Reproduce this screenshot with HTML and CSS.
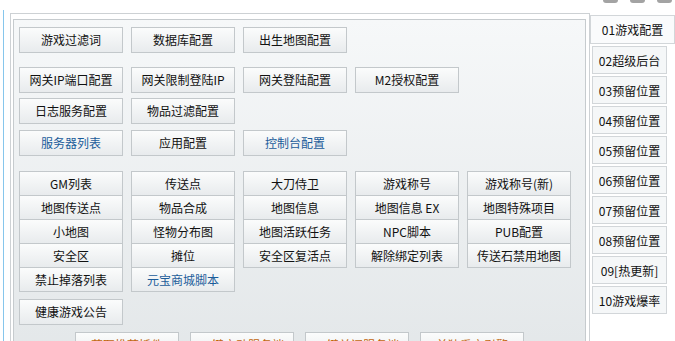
FILE: index.html
```html
<!DOCTYPE html>
<html lang="zh-CN">
<head>
    <meta charset="UTF-8">
    <title>游戏配置</title>
    <link rel="stylesheet" href="styles.css">
</head>
<body>
    <div class="app">
        <div class="topbar">
            <span class="winbtn"></span>
            <span class="winbtn"></span>
            <span class="winbtn"></span>
        </div>
        <div class="main">
            <div class="rail"></div>
            <div class="tabctl">
                <div class="page">
                    <div class="panel">
                        <div class="row row-1">
                            <div class="btn">游戏过滤词</div>
                            <div class="btn">数据库配置</div>
                            <div class="btn">出生地图配置</div>
                        </div>
                        <div class="row row-2">
                            <div class="btn">网关IP端口配置</div>
                            <div class="btn">网关限制登陆IP</div>
                            <div class="btn">网关登陆配置</div>
                            <div class="btn">M2授权配置</div>
                        </div>
                        <div class="row row-3">
                            <div class="btn">日志服务配置</div>
                            <div class="btn">物品过滤配置</div>
                        </div>
                        <div class="row row-4">
                            <div class="btn link">服务器列表</div>
                            <div class="btn">应用配置</div>
                            <div class="btn link">控制台配置</div>
                        </div>

                        <div class="stack">
                            <div class="btn">GM列表</div>
                            <div class="btn">传送点</div>
                            <div class="btn">大刀侍卫</div>
                            <div class="btn">游戏称号</div>
                            <div class="btn">游戏称号(新)</div>
                            <div class="btn">地图传送点</div>
                            <div class="btn">物品合成</div>
                            <div class="btn">地图信息</div>
                            <div class="btn">地图信息 EX</div>
                            <div class="btn">地图特殊项目</div>
                            <div class="btn">小地图</div>
                            <div class="btn">怪物分布图</div>
                            <div class="btn">地图活跃任务</div>
                            <div class="btn">NPC脚本</div>
                            <div class="btn">PUB配置</div>
                            <div class="btn">安全区</div>
                            <div class="btn">摊位</div>
                            <div class="btn">安全区复活点</div>
                            <div class="btn">解除绑定列表</div>
                            <div class="btn">传送石禁用地图</div>
                            <div class="btn">禁止掉落列表</div>
                            <div class="btn link">元宝商城脚本</div>
                        </div>

                        <div class="row row-6">
                            <div class="btn">健康游戏公告</div>
                        </div>
                        <div class="actions">
                            <div class="btn action">获取推荐插件</div>
                            <div class="btn action">一键启动服务端</div>
                            <div class="btn action">一键关闭服务端</div>
                            <div class="btn action">单独重启引擎</div>
                        </div>
                    </div>
                </div>
                <div class="tabs">
                    <div class="tab active">01游戏配置</div>
                    <div class="tab">02超级后台</div>
                    <div class="tab">03预留位置</div>
                    <div class="tab">04预留位置</div>
                    <div class="tab">05预留位置</div>
                    <div class="tab">06预留位置</div>
                    <div class="tab">07预留位置</div>
                    <div class="tab">08预留位置</div>
                    <div class="tab">09[热更新]</div>
                    <div class="tab">10游戏爆率</div>
                </div>
            </div>
        </div>
    </div>
</body>
</html>
```

FILE: styles.css
```css
body {
    margin: 0;
    background: #fff;
    font-family: "Noto Sans CJK SC", "DejaVu Sans", sans-serif;
    font-size: 12px;
    color: #111;
}

.app {
    width: 675px;
    height: 341px;
    overflow: hidden;
    display: flex;
    flex-direction: column;
}

.topbar {
    height: 10px;
    flex-shrink: 0;
    display: flex;
    justify-content: flex-end;
    align-items: flex-start;
    gap: 12px;
    padding-right: 3px;
}

.winbtn {
    width: 15px;
    height: 3px;
    background: #a3a3a3;
    border-radius: 0 0 7px 7px;
}

.main {
    display: flex;
    flex: 1 0 auto;
}

.rail {
    width: 1px;
    margin-left: 3px;
    background: #86c6ec;
}

.tabctl {
    display: flex;
    align-items: flex-start;
    margin-left: 6px;
    margin-top: 3px;
}

.page {
    width: 580px;
    box-sizing: border-box;
    border: 1px solid #cdd1d4;
    border-bottom: none;
    padding: 5px 3px 0 2px;
}

.panel {
    height: 340px;
    box-sizing: border-box;
    border: 1px solid #c6cbce;
    padding: 7px 5px;
    background: linear-gradient(#f6f8f9, #e3e7e9);
}

.row {
    display: flex;
    gap: 8px;
}

.row-1 { margin-bottom: 14px; }
.row-2 { margin-bottom: 5px; }
.row-3 { margin-bottom: 6px; }
.row-4 { margin-bottom: 15px; }
.row-6 { margin-bottom: 7px; }

.btn {
    width: 104px;
    height: 26px;
    box-sizing: border-box;
    border: 1px solid #c3c8cb;
    background: linear-gradient(#fbfcfc, #e8ebed);
    display: flex;
    align-items: center;
    justify-content: center;
    white-space: nowrap;
    line-height: 1;
}

.link {
    color: #1b5c9a;
}

.stack {
    display: grid;
    grid-template-columns: repeat(5, 104px);
    column-gap: 8px;
    margin-bottom: 8px;
}

.stack .btn {
    height: 25px;
    margin-bottom: -1px;
}

.actions {
    display: flex;
    gap: 11px;
    padding-left: 56px;
}

.action {
    color: #c2650c;
}

.tabs {
    display: flex;
    flex-direction: column;
    gap: 2px;
    padding-top: 2px;
}

.tab {
    width: 75px;
    height: 28px;
    margin-left: 2px;
    box-sizing: border-box;
    border: 1px solid #d2d6d9;
    background: #f5f7f8;
    display: flex;
    align-items: center;
    justify-content: center;
    white-space: nowrap;
}

.tab.active {
    width: 85px;
    height: 29px;
    margin-left: 0;
    background: #fafbfc;
}
```
